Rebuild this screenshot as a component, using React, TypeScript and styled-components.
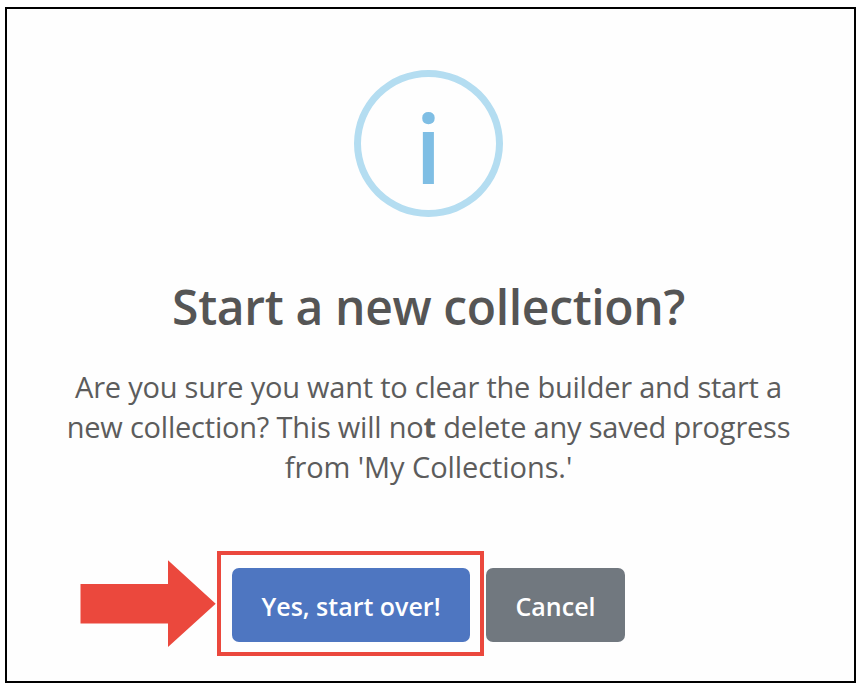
import { FunctionComponent } from 'react';
import styled, { createGlobalStyle } from 'styled-components';

interface MessageLineProps {
  $spacing: number;
}

interface DialogButtonProps {
  $width: number;
  $color: string;
}

const App: FunctionComponent = () => {
  return (
    <>
      <GlobalStyle />
      <Dialog>
        <InfoIcon>
          <InfoMark>i</InfoMark>
        </InfoIcon>
        <Title>Start a new collection?</Title>
        <Message>
          <MessageLine $spacing={-0.23}>
            Are you sure you want to clear the builder and start a
          </MessageLine>
          <MessageLine $spacing={-0.21}>
            new collection? This will no<strong>t</strong> delete any saved
            progress
          </MessageLine>
          <MessageLine $spacing={-0.08}>from 'My Collections.'</MessageLine>
        </Message>
        <Actions>
          <Arrow width="136" height="88" viewBox="0 0 136 88">
            <polygon points="0.5,24 88,24 88,0.3 135.7,43.7 88,87 88,63.5 0.5,63.5" />
          </Arrow>
          <Highlight>
            <DialogButton $width={238} $color="#4e76c1">
              Yes, start over!
            </DialogButton>
          </Highlight>
          <DialogButton $width={139} $color="#71787f">
            Cancel
          </DialogButton>
        </Actions>
      </Dialog>
    </>
  );
};

export default App;

const GlobalStyle = createGlobalStyle`
  * {
    box-sizing: border-box;
  }

  body {
    margin: 0;
    background: #fff;
    font-family: 'Open Sans', 'Noto Sans', sans-serif;
  }
`;

const Dialog = styled.main`
  display: flex;
  flex-direction: column;
  align-items: center;
  width: 851px;
  height: 676px;
  margin: 7px 0 0 5px;
  padding: 61px 4px 0 0;
  border: 2px solid #000;
  background: #fefefe;
`;

const InfoIcon = styled.div`
  display: flex;
  justify-content: center;
  align-items: flex-start;
  flex: none;
  width: 149px;
  height: 147px;
  border: 7px solid #b4ddf1;
  border-radius: 50%;
`;

const InfoMark = styled.span`
  font-size: 96px;
  font-weight: 600;
  line-height: 140px;
  color: #7fbee4;
`;

const Title = styled.h2`
  margin: 57px 0 0;
  font-size: 48px;
  font-weight: 600;
  line-height: 66px;
  letter-spacing: -0.35px;
  white-space: nowrap;
  color: #555;
`;

const Message = styled.p`
  margin: 27px 0 0;
  font-size: 29px;
  line-height: 40px;
  text-align: center;
  color: #5c5c5c;
`;

const MessageLine = styled.span<MessageLineProps>`
  display: block;
  white-space: nowrap;
  letter-spacing: ${(props) => props.$spacing}px;
`;

const Actions = styled.div`
  display: flex;
  align-items: flex-start;
  align-self: flex-start;
  margin: 64px 0 0 73px;
`;

const Arrow = styled.svg`
  margin: 9px 1px 0 0;
  fill: #eb483d;
`;

const Highlight = styled.div`
  margin-right: 2px;
  padding: 13px 10px 10px 11px;
  border: 4px solid #eb483d;

  & + button {
    margin-top: 17px;
  }
`;

const DialogButton = styled.button<DialogButtonProps>`
  display: block;
  width: ${(props) => props.$width}px;
  height: 74px;
  padding: 2px 0 0;
  border: 0;
  border-radius: 7px;
  background: ${(props) => props.$color};
  color: #fff;
  font-family: inherit;
  font-size: 25px;
  font-weight: 600;
  white-space: nowrap;
  cursor: pointer;
`;
